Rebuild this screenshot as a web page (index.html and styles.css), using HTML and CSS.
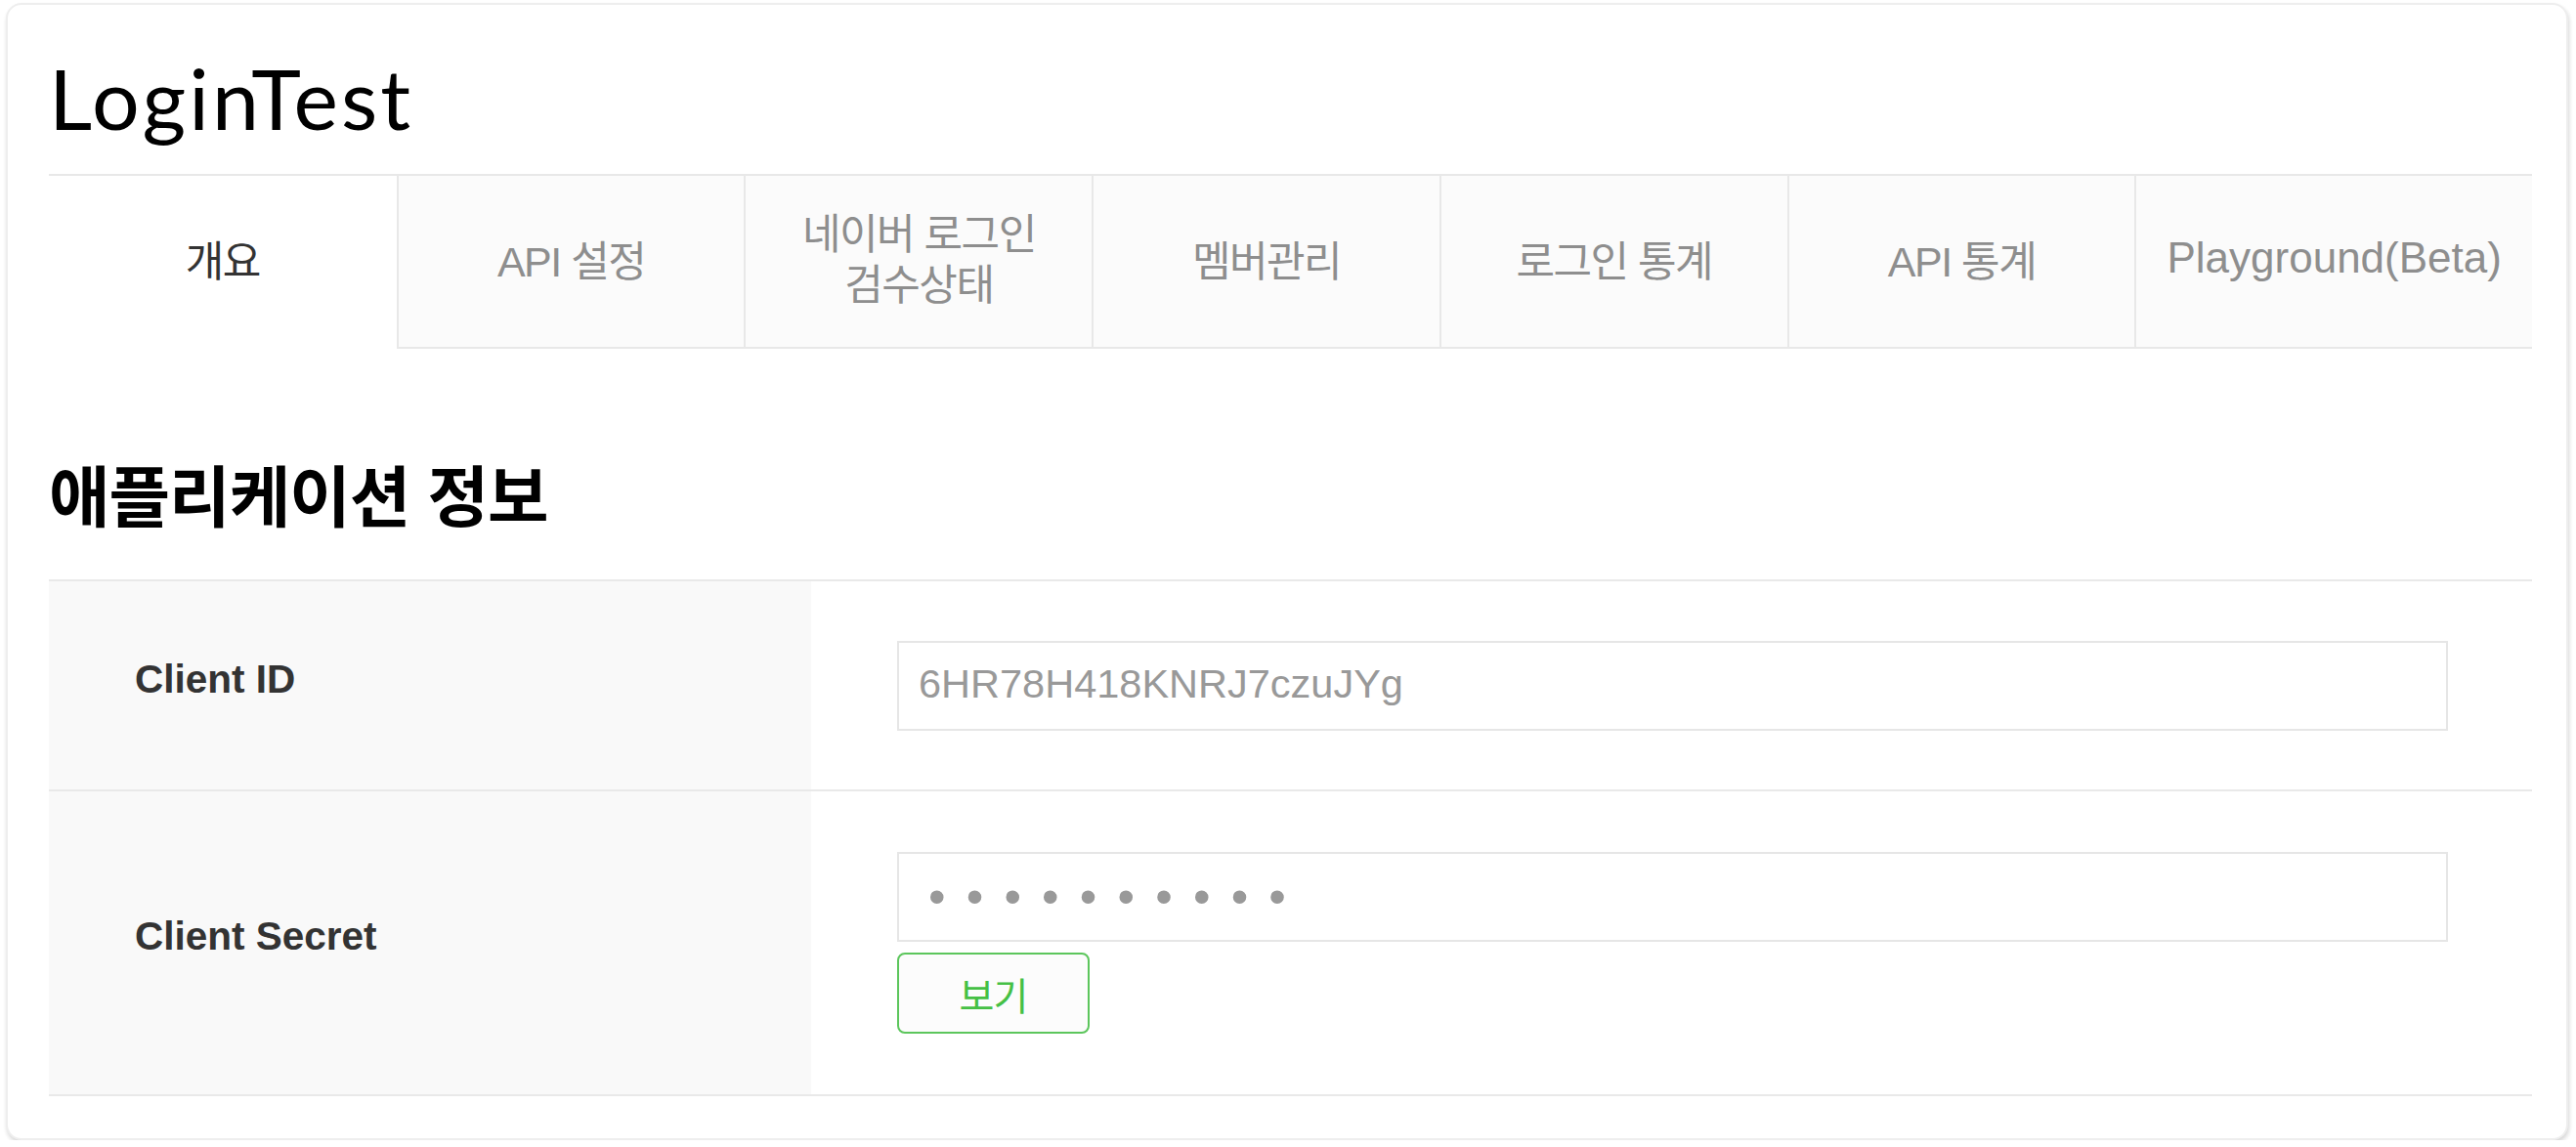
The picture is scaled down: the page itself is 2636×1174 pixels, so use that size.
FILE: index.html
```html
<!DOCTYPE html>
<html lang="ko">
<head>
<meta charset="utf-8">
<title>LoginTest</title>
<link rel="stylesheet" href="styles.css">
</head>
<body>
<div class="card">
  <h1 class="title">LoginTest</h1>
  <nav class="tabs">
    <div class="tab active">개요</div>
    <div class="tab">API 설정</div>
    <div class="tab two-line">네이버 로그인<br>검수상태</div>
    <div class="tab">멤버관리</div>
    <div class="tab">로그인 통계</div>
    <div class="tab">API 통계</div>
    <div class="tab tab-wide latin">Playground(Beta)</div>
  </nav>
  <h2 class="section-title">애플리케이션 정보</h2>
  <div class="info">
    <div class="row">
      <div class="label">Client ID</div>
      <div class="value">
        <input class="field" type="text" value="6HR78H418KNRJ7czuJYg" readonly>
      </div>
    </div>
    <div class="row">
      <div class="label">Client Secret</div>
      <div class="value value-secret">
        <input class="field field-secret" type="password" value="abcdefghij" readonly>
        <button class="btn-show" type="button">보기</button>
      </div>
    </div>
  </div>
</div>
</body>
</html>
```

FILE: styles.css
```css
* { box-sizing: border-box; }

body {
  margin: 0;
  background: #ffffff;
  font-family: "Liberation Sans", "Noto Sans CJK KR", sans-serif;
  color: #333;
}

.card {
  margin: 3px 0 0 6px;
  width: 2622px;
  padding: 44px 35px 43px 42px;
  border: 2px solid #eeeeee;
  border-radius: 16px;
  background: #fff;
  box-shadow: 1px 3px 4px rgba(0, 0, 0, 0.16);
}

.title {
  margin: 0;
  font-family: Lato, "Liberation Sans", sans-serif;
  font-weight: 400;
  font-size: 86px;
  line-height: 102px;
  letter-spacing: 3px;
  color: #000;
}

.tabs {
  display: flex;
  margin-top: 27px;
  border-top: 2px solid #e8e8e8;
}

.tab {
  flex: 0 0 14%;
  height: 177px;
  padding-bottom: 7px;
  display: flex;
  align-items: center;
  justify-content: center;
  text-align: center;
  background: #fbfbfb;
  border-left: 2px solid #e8e8e8;
  border-bottom: 2px solid #e8e8e8;
  font-size: 43px;
  letter-spacing: -1.5px;
  color: #8e8e8e;
}

.tab.active {
  background: #fff;
  border-left: none;
  border-bottom-color: transparent;
  color: #333;
}

.tab.two-line { line-height: 52px; padding-bottom: 4px; }

.tab.tab-wide { flex: 0 0 16%; }

.tab.latin {
  font-size: 44px;
  letter-spacing: 0;
}

.section-title {
  margin: 108px 0 48px;
  font-family: "Noto Sans CJK KR", sans-serif;
  font-weight: 700;
  font-size: 68px;
  line-height: 80px;
  letter-spacing: -1px;
  color: #000;
}

.info { border-top: 2px solid #e9e9e9; }

.row {
  display: grid;
  grid-template-columns: 780px 1fr;
  border-bottom: 2px solid #e9e9e9;
}

.label {
  display: flex;
  align-items: center;
  padding-left: 88px;
  padding-bottom: 13px;
  background: #f9f9f9;
  font-weight: 700;
  font-size: 40.5px;
  color: #333;
}

.value {
  padding: 61px 86px 60px 88px;
  display: flex;
  flex-direction: column;
  align-items: flex-start;
}

.value-secret { padding: 62px 86px 62px 88px; }

.field {
  width: 100%;
  height: 92px;
  border: 2px solid #e6e6e6;
  padding: 0 20px 4px;
  background: #fff;
  font-family: "Liberation Sans", sans-serif;
  font-size: 41.5px;
  color: #999;
  outline: none;
}

.field-secret {
  padding: 0 20px 0 30px;
  font-size: 50px;
  letter-spacing: 21.2px;
}

.btn-show {
  margin-top: 11px;
  width: 197px;
  height: 83px;
  border: 2px solid #5cc65c;
  border-radius: 8px;
  background: #fcfcfc;
  font-family: "Noto Sans CJK KR", sans-serif;
  font-size: 39px;
  letter-spacing: -1px;
  color: #45c045;
  padding: 0;
}
```
